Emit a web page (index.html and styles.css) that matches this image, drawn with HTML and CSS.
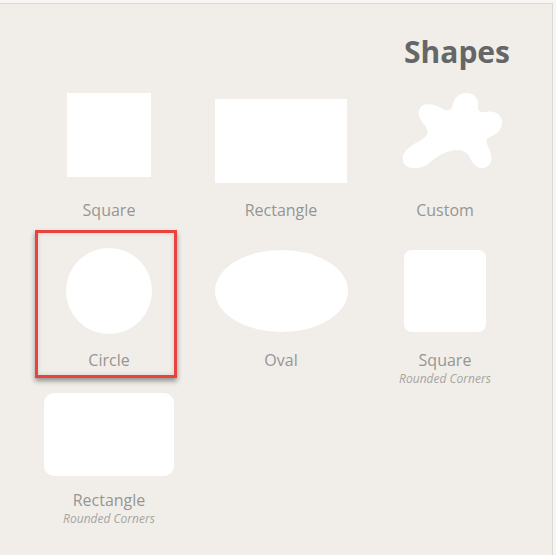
FILE: index.html
```html
<!DOCTYPE html>
<html>
<head>
<title>Shapes</title>
<meta name="viewport" content="width=device-width, initial-scale=1.0">
<link rel="stylesheet" href="styles.css">
</head>
<body>
    <div class="panel">
        <h1 class="panel-title">Shapes</h1>

        <div class="shape-grid">
            <div class="shape-cell first-row">
                <div class="shape-area">
                    <div class="shape square"></div>
                </div>
                <p class="shape-name">Square</p>
            </div>
            <div class="shape-cell first-row">
                <div class="shape-area">
                    <div class="shape rectangle"></div>
                </div>
                <p class="shape-name">Rectangle</p>
            </div>
            <div class="shape-cell first-row">
                <div class="shape-area">
                    <svg class="shape custom" width="100" height="78" viewBox="0 0 100 78">
                        <path fill="#ffffff" d="M63 1 C71 0 77 6 76 13 C75 18 77 21 84 20 C94 18 101 24 100 32 C99 40 92 43 86 46 C82 49 87 55 89 62 C91 70 87 76 80 76 C73 76 70 70 67 64 C63 58 56 57 48 59 C40 61 33 66 26 72 C18 78 3 78 1 69 C-1 60 8 54 16 50 C24 46 28 41 24 35 C19 29 14 22 18 16 C22 10 33 12 41 17 C46 20 50 18 51 12 C53 5 57 2 63 1 Z"/>
                    </svg>
                </div>
                <p class="shape-name">Custom</p>
            </div>

            <div class="shape-cell selected">
                <div class="shape-area">
                    <div class="shape circle"></div>
                </div>
                <p class="shape-name">Circle</p>
            </div>
            <div class="shape-cell">
                <div class="shape-area">
                    <div class="shape oval"></div>
                </div>
                <p class="shape-name">Oval</p>
            </div>
            <div class="shape-cell">
                <div class="shape-area">
                    <div class="shape rounded-square"></div>
                </div>
                <p class="shape-name">Square</p>
                <p class="shape-note">Rounded Corners</p>
            </div>

            <div class="shape-cell last-row">
                <div class="shape-area">
                    <div class="shape rounded-rectangle"></div>
                </div>
                <p class="shape-name">Rectangle</p>
                <p class="shape-note">Rounded Corners</p>
            </div>
        </div>
    </div>
</body>
</html>
```

FILE: styles.css
```css
/* Shape picker panel */
body {
    margin: 0;
    background-color: #f7f6f4;
    font-family: "Open Sans", "Liberation Sans", sans-serif;
}

.panel {
    box-sizing: border-box;
    width: 553px;
    height: 552px;
    margin-top: 3px;
    padding: 28px 42px 0 0;
    background-color: #f1eee9;
    border-top: 1px solid #dcd9d4;
    border-right: 1px solid #dcd9d4;
}

.panel-title {
    margin: 0 0 20px;
    font-size: 30px;
    line-height: 40px;
    font-weight: 700;
    color: #656668;
    text-align: right;
}

.shape-grid {
    display: grid;
    grid-template-columns: 170px 174px 154px;
    grid-template-rows: 153px 143px auto;
    padding-left: 24px;
}

.shape-cell {
    position: relative;
    display: flex;
    flex-direction: column;
    align-items: center;
}

.shape-area {
    height: 92px;
    display: flex;
    align-items: center;
    justify-content: center;
}

.shape-name {
    margin: 12px 0 0;
    font-size: 16px;
    line-height: 22px;
    color: #959595;
}

.first-row .shape-name {
    margin-top: 15px;
}

.last-row .shape-name {
    margin-top: 9px;
}

.shape-note {
    margin: 0;
    font-size: 12px;
    line-height: 16px;
    font-style: italic;
    color: #a5a4a2;
}

/* the shapes themselves */
.shape {
    background-color: #ffffff;
}

.square {
    width: 84px;
    height: 84px;
    margin-bottom: 6px;
}

.rectangle {
    width: 132px;
    height: 84px;
    margin-top: 6px;
}

.custom {
    background: none;
    margin: 0 0 14px 14px;
    overflow: visible;
}

.circle {
    width: 86px;
    height: 86px;
    border-radius: 50%;
}

.oval {
    width: 133px;
    height: 82px;
    border-radius: 50%;
}

.rounded-square {
    width: 82px;
    height: 82px;
    border-radius: 8px;
}

.rounded-rectangle {
    width: 130px;
    height: 83px;
    border-radius: 10px;
}

/* red frame round the chosen shape */
.selected::after {
    content: "";
    position: absolute;
    top: -15px;
    bottom: 10px;
    left: 11px;
    right: 17px;
    border: 3px solid #e9433f;
    box-shadow: 0 3px 5px rgba(0, 0, 0, 0.4), inset 0 0 4px rgba(0, 0, 0, 0.15);
}
```
